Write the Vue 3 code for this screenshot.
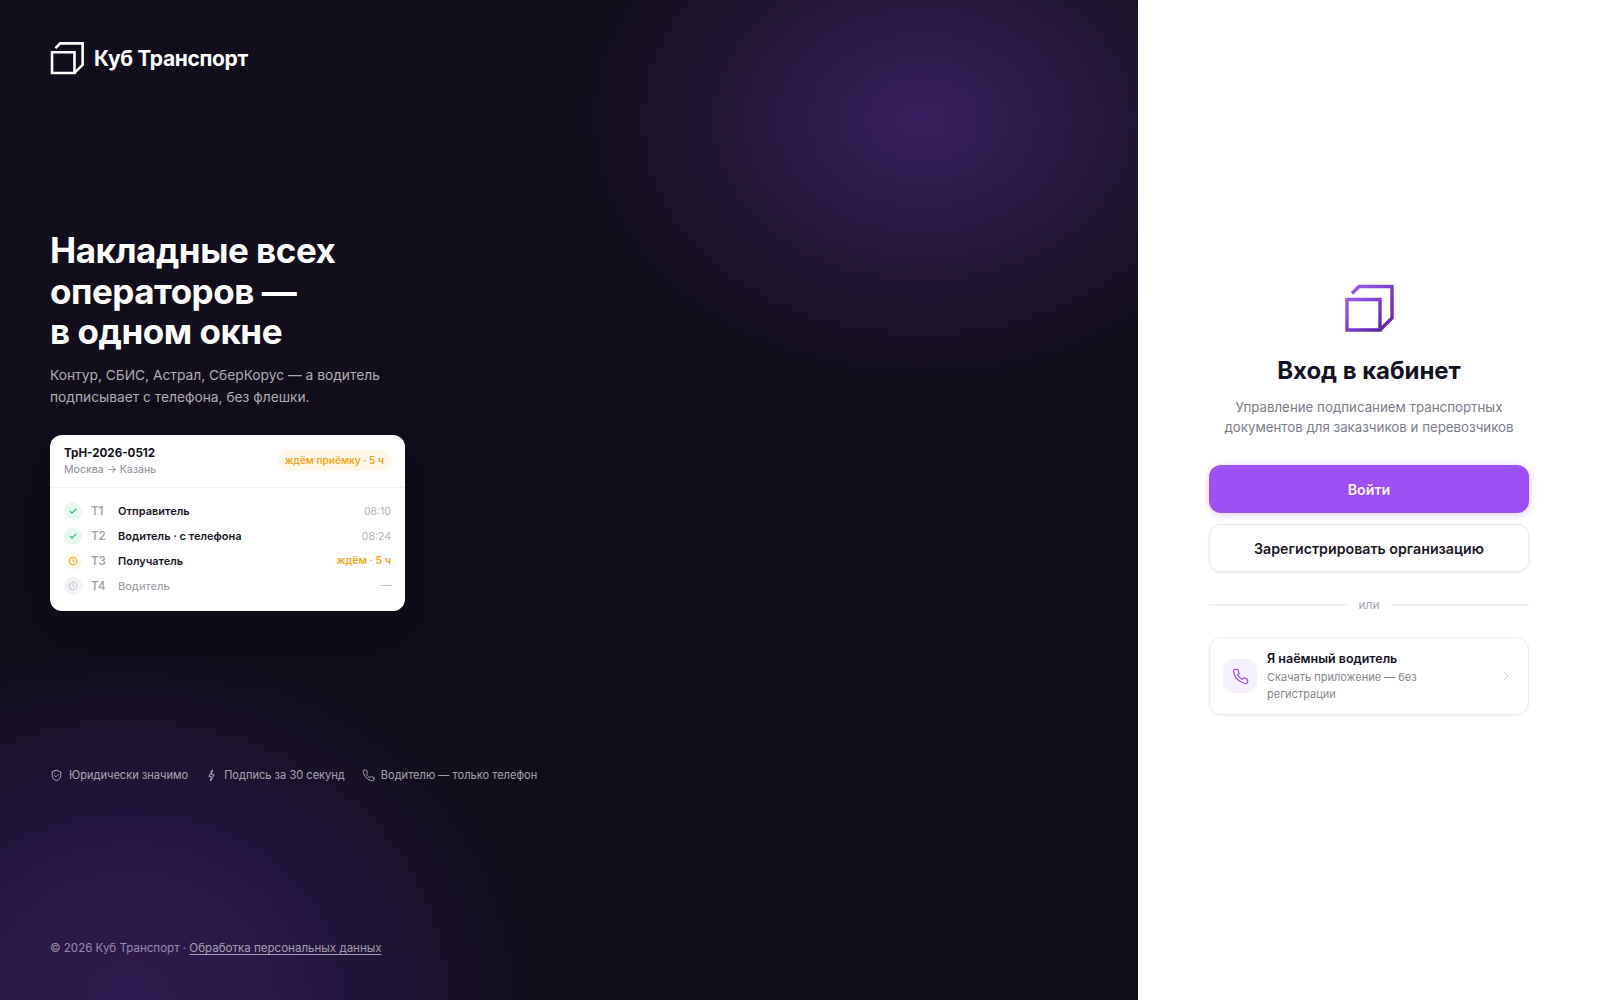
<template>
  <div class="page">
    <section class="promo">
      <div class="brand">
        <svg class="brand-mark" viewBox="0 0 50 48" fill="none" stroke="#fff" stroke-width="3.8">
          <path d="M3 15.500H36V46H3Z" />
          <path d="M8 9.500L15 2.500H48V34L36 46" />
        </svg>
        <span class="brand-name">Куб Транспорт</span>
      </div>

      <div class="promo-middle">
        <h1 class="promo-title">Накладные всех<br />операторов —<br />в одном окне</h1>
        <p class="promo-sub">Контур, СБИС, Астрал, СберКорус — а водитель<br />подписывает с телефона, без флешки.</p>

        <div class="doc-card">
          <div class="doc-head">
            <div>
              <div class="doc-num">ТрН-2026-0512</div>
              <div class="doc-route">Москва → Казань</div>
            </div>
            <span class="doc-badge">ждём приёмку · 5 ч</span>
          </div>
          <ul class="doc-steps">
            <li v-for="s in steps" :key="s.code" class="step" :class="s.state">
              <span class="step-icon">
                <svg v-if="s.state === 'done'" viewBox="0 0 24 24" fill="none" stroke="currentColor" stroke-width="2.6" stroke-linecap="round" stroke-linejoin="round">
                  <path d="M5 12.500l4.500 4.500L19 7.500" />
                </svg>
                <svg v-else viewBox="0 0 24 24" fill="none" stroke="currentColor" stroke-width="2.6" stroke-linecap="round" stroke-linejoin="round">
                  <circle cx="12" cy="12" r="9" />
                  <path d="M12 7v5l3 2" />
                </svg>
              </span>
              <span class="step-code">{{ s.code }}</span>
              <span class="step-name">{{ s.name }}</span>
              <span class="step-time">{{ s.time }}</span>
            </li>
          </ul>
        </div>
      </div>

      <div class="features">
        <span class="feature">
          <svg viewBox="0 0 24 24" fill="none" stroke="currentColor" stroke-width="1.8" stroke-linecap="round" stroke-linejoin="round">
            <path d="M12 2.500l8 3v6c0 5-3.400 8.400-8 10-4.600-1.600-8-5-8-10v-6z" />
            <path d="M8.500 12l2.500 2.500 4.500-4.500" />
          </svg>
          Юридически значимо
        </span>
        <span class="feature">
          <svg viewBox="0 0 24 24" fill="none" stroke="currentColor" stroke-width="1.8" stroke-linecap="round" stroke-linejoin="round">
            <path d="M13.500 2L7 13.500h4.500L10.500 22 17 10.500h-4.500z" />
          </svg>
          Подпись за 30 секунд
        </span>
        <span class="feature">
          <svg viewBox="0 0 24 24" fill="none" stroke="currentColor" stroke-width="1.8" stroke-linecap="round" stroke-linejoin="round">
            <path :d="phonePath" />
          </svg>
          Водителю — только телефон
        </span>
      </div>

      <div class="copyright">© 2026 Куб Транспорт · <a href="#">Обработка персональных данных</a></div>
    </section>

    <section class="auth">
      <div class="auth-box">
        <svg class="auth-mark" viewBox="0 0 50 48" fill="none" stroke="url(#markGrad)" stroke-width="3.4">
          <defs>
            <linearGradient id="markGrad" x1="0" y1="0" x2="1" y2="1">
              <stop offset="0" stop-color="#9a5cf0" />
              <stop offset="1" stop-color="#5b21a6" />
            </linearGradient>
          </defs>
          <path d="M3 15.500H36V46H3Z" />
          <path d="M8 9.500L15 2.500H48V34L36 46" />
        </svg>
        <h2 class="auth-title">Вход в кабинет</h2>
        <p class="auth-sub">Управление подписанием транспортных документов для заказчиков и перевозчиков</p>

        <button class="btn btn-primary">Войти</button>
        <button class="btn btn-outline">Зарегистрировать организацию</button>

        <div class="divider"><span>или</span></div>

        <a class="driver" href="#">
          <span class="driver-icon">
            <svg viewBox="0 0 24 24" fill="none" stroke="currentColor" stroke-width="1.8" stroke-linecap="round" stroke-linejoin="round">
              <path :d="phonePath" />
            </svg>
          </span>
          <span class="driver-text">
            <span class="driver-title">Я наёмный водитель</span>
            <span class="driver-sub">Скачать приложение — без регистрации</span>
          </span>
          <svg class="driver-arrow" viewBox="0 0 24 24" fill="none" stroke="currentColor" stroke-width="2" stroke-linecap="round" stroke-linejoin="round">
            <path d="M9 5l7 7-7 7" />
          </svg>
        </a>
      </div>
    </section>
  </div>
</template>

<script setup>
const phonePath =
  "M22 16.900v3a2 2 0 0 1-2.200 2 19.800 19.800 0 0 1-8.600-3.100 19.500 19.500 0 0 1-6-6A19.800 19.800 0 0 1 2.100 4.200 2 2 0 0 1 4.100 2h3a2 2 0 0 1 2 1.700c.1 1 .4 1.900.7 2.800a2 2 0 0 1-.5 2.100L8.100 9.900a16 16 0 0 0 6 6l1.300-1.300a2 2 0 0 1 2.100-.4c.9.300 1.800.6 2.800.7a2 2 0 0 1 1.700 2z";

const steps = [
  { code: "Т1", name: "Отправитель", time: "08:10", state: "done" },
  { code: "Т2", name: "Водитель · с телефона", time: "08:24", state: "done" },
  { code: "Т3", name: "Получатель", time: "ждём · 5 ч", state: "wait" },
  { code: "Т4", name: "Водитель", time: "—", state: "idle" },
];
</script>

<style>
html,
body {
  margin: 0;
  background: #fff;
}
</style>

<style scoped>
.page {
  display: grid;
  grid-template-columns: 1138px 462px;
  height: 1000px;
  overflow: hidden;
  font-family: Inter, "Noto Sans", sans-serif;
}

.promo {
  display: flex;
  flex-direction: column;
  padding: 41px 50px 0;
  color: #fff;
  background:
    radial-gradient(ellipse 340px 260px at 923px 120px, #38205e 0, #2e1b48 30%, #231735 60%, rgba(18, 14, 28, 0) 100%),
    radial-gradient(ellipse 400px 350px at 130px 1000px, #2e1a4c 0, #2a1846 35%, #1e1434 65%, rgba(18, 14, 28, 0) 100%),
    #120e1c;
}

.brand {
  display: flex;
  align-items: center;
  gap: 10px;
  height: 34px;
}
.brand-mark {
  width: 34px;
  height: 34px;
  flex: none;
}
.brand-name {
  font-size: 21px;
  font-weight: 700;
  letter-spacing: -0.35px;
}

.promo-middle {
  margin-top: 155px;
}
.promo-title {
  margin: 0;
  font-size: 35px;
  line-height: 40.500px;
  font-weight: 700;
  letter-spacing: -0.48px;
}
.promo-sub {
  margin: 12.500px 0 0;
  font-size: 13.780px;
  line-height: 22px;
  color: rgba(255, 255, 255, 0.66);
}

.doc-card {
  width: 355px;
  margin-top: 26.500px;
  background: #fff;
  border-radius: 12px;
  color: #14121f;
  box-shadow: 0 20px 50px rgba(0, 0, 0, 0.35);
}
.doc-head {
  display: flex;
  align-items: center;
  justify-content: space-between;
  padding: 10px 14px 10px;
  border-bottom: 1px solid #f1f2f4;
}
.doc-num {
  font-size: 11.600px;
  line-height: 17px;
  font-weight: 700;
}
.doc-route {
  font-size: 10.600px;
  line-height: 15px;
  color: #8a8d96;
}
.doc-badge {
  padding: 3px 7px;
  border-radius: 999px;
  background: #fff8e8;
  color: #f5a623;
  font-size: 10.100px;
  line-height: 15px;
  font-weight: 600;
}
.doc-steps {
  list-style: none;
  margin: 0;
  padding: 11.500px 14px 13px;
}
.step {
  display: flex;
  align-items: center;
  height: 24.800px;
  font-size: 11px;
}
.step-icon {
  display: flex;
  align-items: center;
  justify-content: center;
  width: 18px;
  height: 18px;
  border-radius: 50%;
  flex: none;
}
.step-icon svg {
  width: 10px;
  height: 10px;
}
.done .step-icon {
  background: #e9f9f2;
  color: #22b573;
}
.wait .step-icon {
  background: #fff8e8;
  color: #f5a623;
}
.idle .step-icon {
  background: #f1f2f4;
  color: #c6c8cd;
}
.step-code {
  width: 27px;
  margin-left: 9px;
  font-size: 11.500px;
  font-weight: 600;
  color: #a3a6ad;
}
.step-name {
  flex: 1;
  font-weight: 600;
  color: #1a1826;
}
.idle .step-name {
  font-weight: 500;
  color: #a3a6ad;
}
.step-time {
  font-size: 10.500px;
  color: #b3b5bb;
}
.wait .step-time {
  font-weight: 600;
  color: #f5a623;
}

.features {
  display: flex;
  gap: 17px;
  margin-top: 156px;
}
.feature {
  display: flex;
  align-items: center;
  gap: 6px;
  font-size: 11.070px;
  line-height: 16px;
  color: rgba(255, 255, 255, 0.62);
}
.feature svg {
  width: 13px;
  height: 13px;
  flex: none;
}

.copyright {
  margin-top: auto;
  margin-bottom: 44px;
  font-size: 11.550px;
  line-height: 16px;
  color: rgba(255, 255, 255, 0.5);
}
.copyright a {
  color: rgba(255, 255, 255, 0.58);
  text-decoration: underline;
  text-underline-offset: 2px;
}

.auth {
  display: flex;
  justify-content: center;
  padding-top: 284px;
  background: #fff;
}
.auth-box {
  display: flex;
  flex-direction: column;
  align-items: center;
  width: 320px;
}
.auth-mark {
  width: 50px;
  height: 48px;
}
.auth-title {
  margin: 24px 0 0;
  font-size: 24px;
  line-height: 30px;
  font-weight: 700;
  letter-spacing: -0.05px;
  color: #14121f;
}
.auth-sub {
  margin: 11px 0 0;
  font-size: 13.300px;
  line-height: 20px;
  text-align: center;
  color: #7b7e88;
}
.btn {
  width: 100%;
  border-radius: 12px;
  font-family: inherit;
  font-size: 14.200px;
  font-weight: 600;
  cursor: pointer;
}
.btn-primary {
  height: 48px;
  margin-top: 28px;
  border: none;
  background: #9b51f5;
  color: #fbf7ff;
  box-shadow: 0 2px 8px rgba(155, 81, 245, 0.3);
}
.btn-outline {
  height: 48px;
  margin-top: 11px;
  border: 1px solid #e9eaee;
  background: #fff;
  color: #1a1826;
  box-shadow: 0 1px 3px rgba(20, 18, 31, 0.08);
}
.divider {
  display: flex;
  align-items: center;
  gap: 11px;
  width: 100%;
  margin-top: 25px;
  font-size: 12px;
  line-height: 16px;
  color: #a3a6ad;
}
.divider::before,
.divider::after {
  content: "";
  flex: 1;
  height: 2px;
  background: #eef0f2;
}
.driver {
  display: flex;
  align-items: center;
  box-sizing: border-box;
  width: 100%;
  height: 78px;
  margin-top: 24px;
  padding: 0 13px;
  border: 1px solid #ebecef;
  border-radius: 12px;
  color: inherit;
  text-decoration: none;
  box-shadow: 0 1px 2px rgba(20, 18, 31, 0.05);
}
.driver-icon {
  display: flex;
  align-items: center;
  justify-content: center;
  width: 34px;
  height: 34px;
  border-radius: 10px;
  background: #f6f0fe;
  color: #9b51f5;
  flex: none;
}
.driver-icon svg {
  width: 17px;
  height: 17px;
}
.driver-text {
  display: flex;
  flex-direction: column;
  width: 170px;
  margin-left: 10px;
}
.driver-title {
  font-size: 12.500px;
  line-height: 18px;
  font-weight: 600;
  color: #14121f;
}
.driver-sub {
  margin-top: 1px;
  font-size: 11px;
  line-height: 16.500px;
  color: #85888f;
}
.driver-arrow {
  width: 12px;
  height: 12px;
  margin-left: auto;
  margin-right: 3px;
  color: #cfd1d6;
}
</style>
